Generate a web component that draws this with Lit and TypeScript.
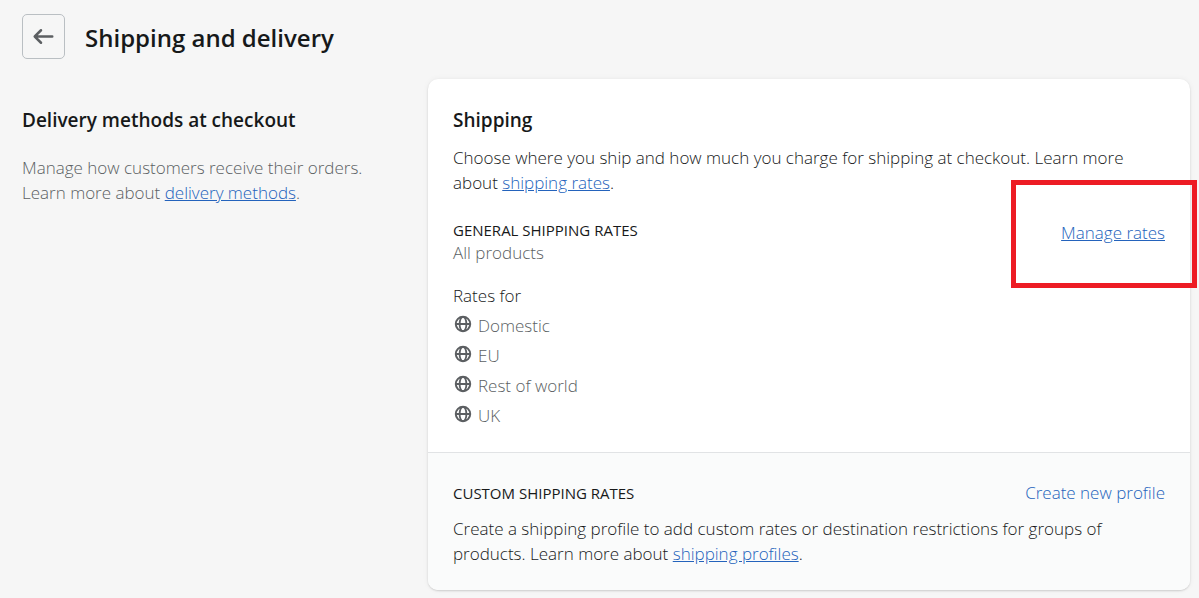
import { LitElement, html, css, svg } from "lit";
import { customElement } from "lit/decorators.js";

const arrow = svg`<path d="M17 9H5.414l3.293-3.293a.999.999 0 1 0-1.414-1.414l-5 5a.999.999 0 0 0 0 1.414l5 5a.997.997 0 0 0 1.414 0 .999.999 0 0 0 0-1.414L5.414 11H17a1 1 0 1 0 0-2z" fill="currentColor"/>`;

const globe = svg`<g fill="none" stroke="currentColor" stroke-width="2"><circle cx="10" cy="10" r="7.2"/><ellipse cx="10" cy="10" rx="3.4" ry="7.2" stroke-width="1.8"/><path d="M2.8 10h14.4" stroke-width="2"/></g>`;

@customElement("app-root")
export class AppRoot extends LitElement {
  static styles = css`
    :host {
      display: block;
      min-height: 100vh;
      box-sizing: border-box;
      padding: 14px 9px 8px 22px;
      background: #f6f6f6;
      color: #17191a;
      font: 300 17px/25px "Open Sans", sans-serif;
    }
    h1, h2, h3, p, ul {
      margin: 0;
      padding: 0;
    }
    header {
      display: flex;
      align-items: center;
      gap: 20px;
      margin-bottom: 20px;
    }
    h1 {
      padding-top: 2px;
      font-size: 24px;
      font-weight: 600;
      line-height: 35px;
    }
    h2 {
      font-size: 19px;
      font-weight: 600;
      line-height: 32px;
    }
    h3 {
      font-size: 15px;
      font-weight: 400;
      line-height: 20px;
    }
    a {
      color: #2463bc;
    }
    svg {
      display: block;
      color: #5c5f62;
    }
    .back {
      display: grid;
      place-items: center;
      width: 43px;
      height: 45px;
      padding: 0;
      border: 1px solid #babfc3;
      border-radius: 5px;
      background: transparent;
    }
    .layout {
      display: grid;
      grid-template-columns: 1fr 2fr;
      gap: 25px;
    }
    .intro {
      padding-top: 25px;
    }
    .intro p {
      margin-top: 19px;
    }
    .subdued {
      color: #5b5f63;
    }
    .card {
      border-radius: 10px;
      background: #fff;
      box-shadow: 0 0 6px rgba(23, 24, 24, 0.05), 0 1px 2px rgba(0, 0, 0, 0.15);
    }
    .section {
      padding: 25px 25px 24px;
    }
    .section h2 + p {
      margin-top: 9px;
    }
    .row {
      display: flex;
      justify-content: space-between;
      align-items: flex-start;
    }
    .general {
      margin: 25px 0 18px;
    }
    .marked {
      position: relative;
    }
    .marked::after {
      content: "";
      position: absolute;
      inset: -40px -32px -43px -50px;
      border: 5px solid #ed1c24;
      pointer-events: none;
    }
    ul {
      display: grid;
      gap: 5px;
      margin-top: 5px;
      list-style: none;
    }
    li {
      display: flex;
      gap: 5px;
    }
    li svg {
      margin-top: 1px;
    }
    .custom {
      padding-top: 27px;
      border-top: 1px solid #e1e3e5;
      border-radius: 0 0 10px 10px;
      background: #fafbfb;
    }
    .custom .row {
      align-items: center;
      margin-bottom: 11px;
    }
    .plain {
      text-decoration: none;
    }
  `;

  private zones = ["Domestic", "EU", "Rest of world", "UK"];

  render() {
    return html`
      <header>
        <button class="back" type="button" aria-label="Back">
          <svg width="25" height="25" viewBox="0 0 20 20">${arrow}</svg>
        </button>
        <h1>Shipping and delivery</h1>
      </header>
      <main class="layout">
        <section class="intro">
          <h2>Delivery methods at checkout</h2>
          <p class="subdued">
            Manage how customers receive their orders. Learn more about
            <a href="#methods">delivery methods</a>.
          </p>
        </section>
        <article class="card">
          <section class="section">
            <h2>Shipping</h2>
            <p>
              Choose where you ship and how much you charge for shipping at checkout. Learn more about
              <a href="#rates">shipping rates</a>.
            </p>
            <div class="row general">
              <div>
                <h3>GENERAL SHIPPING RATES</h3>
                <p class="subdued">All products</p>
              </div>
              <div class="marked"><a href="#manage">Manage rates</a></div>
            </div>
            <p>Rates for</p>
            <ul>
              ${this.zones.map(
                (zone) => html`<li class="subdued">
                  <svg width="20" height="20" viewBox="0 0 20 20">${globe}</svg>${zone}
                </li>`
              )}
            </ul>
          </section>
          <section class="section custom">
            <div class="row">
              <h3>CUSTOM SHIPPING RATES</h3>
              <a class="plain" href="#create">Create new profile</a>
            </div>
            <p>
              Create a shipping profile to add custom rates or destination restrictions for groups of products.
              Learn more about <a href="#profiles">shipping profiles</a>.
            </p>
          </section>
        </article>
      </main>
    `;
  }
}
